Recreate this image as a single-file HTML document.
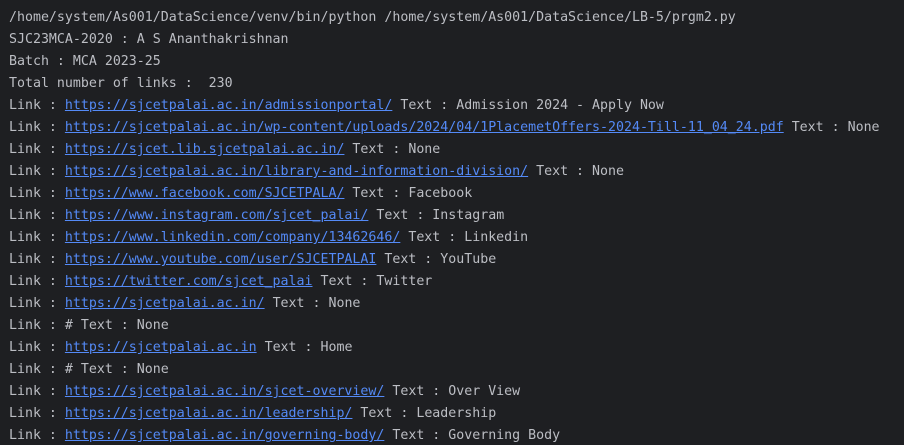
<!DOCTYPE html>
<html><head><style>
html,body{margin:0;padding:0;background:#1e1f22;width:904px;height:445px;overflow:hidden}
pre{margin:0;padding:7px 0 0 9px;font-family:"DejaVu Sans Mono","Liberation Mono",monospace;font-size:13.28px;line-height:22px;color:#bcbec4;white-space:pre}
a{color:#548af7;text-decoration:underline}
</style></head><body><pre>/home/system/As001/DataScience/venv/bin/python /home/system/As001/DataScience/LB-5/prgm2.py
SJC23MCA-2020 : A S Ananthakrishnan
Batch : MCA 2023-25
Total number of links :  230
Link : <a>https://sjcetpalai.ac.in/admissionportal/</a> Text : Admission 2024 - Apply Now
Link : <a>https://sjcetpalai.ac.in/wp-content/uploads/2024/04/1PlacemetOffers-2024-Till-11_04_24.pdf</a> Text : None
Link : <a>https://sjcet.lib.sjcetpalai.ac.in/</a> Text : None
Link : <a>https://sjcetpalai.ac.in/library-and-information-division/</a> Text : None
Link : <a>https://www.facebook.com/SJCETPALA/</a> Text : Facebook
Link : <a>https://www.instagram.com/sjcet_palai/</a> Text : Instagram
Link : <a>https://www.linkedin.com/company/13462646/</a> Text : Linkedin
Link : <a>https://www.youtube.com/user/SJCETPALAI</a> Text : YouTube
Link : <a>https://twitter.com/sjcet_palai</a> Text : Twitter
Link : <a>https://sjcetpalai.ac.in/</a> Text : None
Link : # Text : None
Link : <a>https://sjcetpalai.ac.in</a> Text : Home
Link : # Text : None
Link : <a>https://sjcetpalai.ac.in/sjcet-overview/</a> Text : Over View
Link : <a>https://sjcetpalai.ac.in/leadership/</a> Text : Leadership
Link : <a>https://sjcetpalai.ac.in/governing-body/</a> Text : Governing Body
</pre></body></html>
